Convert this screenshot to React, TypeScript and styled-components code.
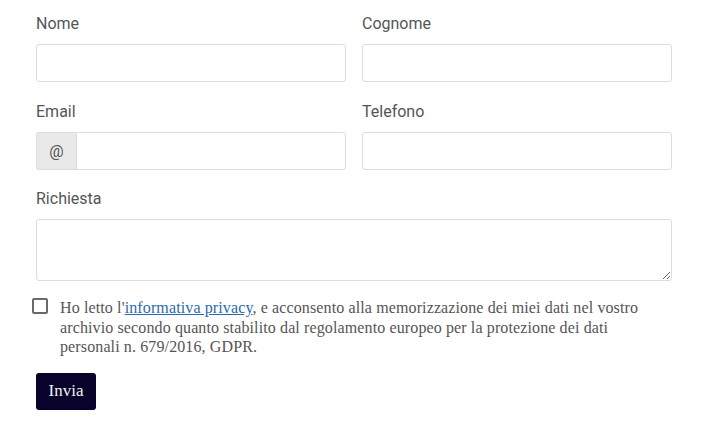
import React from "react";
import styled, { createGlobalStyle } from "styled-components";

const Global = createGlobalStyle`
  html, body { margin: 0; padding: 0; background: #fff; }
  * { box-sizing: border-box; }
`;

const Form = styled.form`
  width: 636px;
  margin-left: 36px;
  padding-top: 12px;
  display: flex;
  flex-direction: column;
  gap: 18px;
  font-family: Roboto, "Liberation Sans", sans-serif;
`;

const Row = styled.div`
  display: grid;
  grid-template-columns: 1fr 1fr;
  column-gap: 16px;
`;

const Field = styled.div<{ $shift?: number }>`
  display: flex;
  flex-direction: column;
  margin-top: ${(p) => p.$shift ?? 0}px;
`;

const Label = styled.label`
  font-size: 16px;
  line-height: 24px;
  color: #555;
  margin-bottom: 8px;
`;

const Input = styled.input`
  height: 38px;
  width: 100%;
  border: 1px solid #dcdcdc;
  border-radius: 3px;
  background: #fff;
  padding: 0 12px;
  font: inherit;
  outline: none;
`;

const Group = styled.div`
  display: flex;
  height: 38px;
`;

const Addon = styled.span`
  width: 40px;
  display: flex;
  align-items: center;
  justify-content: center;
  background: #e9e9e9;
  border: 1px solid #dcdcdc;
  border-right: none;
  border-radius: 3px 0 0 3px;
  color: #555;
  font-size: 16px;
`;

const GroupInput = styled(Input)`
  flex: 1;
  border-radius: 0 3px 3px 0;
`;

const TextArea = styled.textarea`
  height: 62px;
  width: 100%;
  border: 1px solid #dcdcdc;
  border-radius: 3px;
  padding: 8px 12px;
  font: inherit;
  outline: none;
  resize: vertical;
  display: block;
`;

const Consent = styled.div`
  display: flex;
  align-items: flex-start;
  gap: 12px;
  margin-left: -4px;
  margin-top: -1px;
`;

const Box = styled.span`
  flex: none;
  width: 16px;
  height: 16px;
  border: 2px solid #6a6a6a;
  border-radius: 2px;
`;

const ConsentText = styled.p`
  margin: 0;
  padding-right: 20px;
  font-family: "Liberation Serif", serif;
  font-size: 16px;
  letter-spacing: 0.12px;
  line-height: 19.5px;
  color: #555;
`;

const Link = styled.a`
  color: #2a6ab3;
  text-decoration: underline;
`;

const Submit = styled.button`
  align-self: flex-start;
  width: 60px;
  height: 37px;
  border: none;
  border-radius: 3px;
  background: #07032a;
  color: #f2f2f2;
  font-family: "Liberation Serif", serif;
  font-size: 17px;
  margin-top: -2px;
  cursor: pointer;
`;

export default function App() {
  return (
    <>
      <Global />
      <Form onSubmit={(e) => e.preventDefault()}>
        <Row>
          <Field>
            <Label>Nome</Label>
            <Input type="text" />
          </Field>
          <Field>
            <Label>Cognome</Label>
            <Input type="text" />
          </Field>
        </Row>
        <Row>
          <Field>
            <Label>Email</Label>
            <Group>
              <Addon>@</Addon>
              <GroupInput type="email" />
            </Group>
          </Field>
          <Field>
            <Label>Telefono</Label>
            <Input type="tel" />
          </Field>
        </Row>
        <Field $shift={-1}>
          <Label>Richiesta</Label>
          <TextArea />
        </Field>
        <Consent>
          <Box />
          <ConsentText>
            Ho letto l'<Link href="#">informativa privacy</Link>, e acconsento alla memorizzazione dei miei dati nel vostro archivio secondo quanto stabilito dal regolamento europeo per la protezione dei dati personali n. 679/2016, GDPR.
          </ConsentText>
        </Consent>
        <Submit type="submit">Invia</Submit>
      </Form>
    </>
  );
}
